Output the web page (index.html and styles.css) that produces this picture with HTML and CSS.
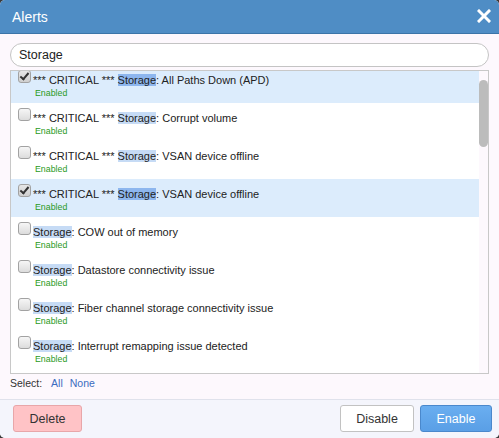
FILE: index.html
```html
<!DOCTYPE html>
<html>
<head>
<meta charset="utf-8">
<title>Alerts</title>
<link rel="stylesheet" href="styles.css">
</head>
<body>
<div class="dialog">
  <div class="header">
    <span class="title">Alerts</span>
    <svg class="close" width="14" height="14" viewBox="0 0 14 14"><path d="M2 2 L12 12 M12 2 L2 12" stroke="#fff" stroke-width="3" stroke-linecap="square"/></svg>
  </div>
  <div class="content">
    <div class="search">Storage</div>
    <div class="listbox">
      <div class="rows">
        <div class="rowsinner">
          <div class="row selected"><span class="cb checked"></span><div class="txt"><div class="name">*** CRITICAL *** <mark>Storage</mark>: All Paths Down (APD)</div><div class="status">Enabled</div></div></div>
          <div class="row"><span class="cb"></span><div class="txt"><div class="name">*** CRITICAL *** <mark>Storage</mark>: Corrupt volume</div><div class="status">Enabled</div></div></div>
          <div class="row"><span class="cb"></span><div class="txt"><div class="name">*** CRITICAL *** <mark>Storage</mark>: VSAN device offline</div><div class="status">Enabled</div></div></div>
          <div class="row selected"><span class="cb checked"></span><div class="txt"><div class="name">*** CRITICAL *** <mark>Storage</mark>: VSAN device offline</div><div class="status">Enabled</div></div></div>
          <div class="row"><span class="cb"></span><div class="txt"><div class="name"><mark>Storage</mark>: COW out of memory</div><div class="status">Enabled</div></div></div>
          <div class="row"><span class="cb"></span><div class="txt"><div class="name"><mark>Storage</mark>: Datastore connectivity issue</div><div class="status">Enabled</div></div></div>
          <div class="row"><span class="cb"></span><div class="txt"><div class="name"><mark>Storage</mark>: Fiber channel storage connectivity issue</div><div class="status">Enabled</div></div></div>
          <div class="row"><span class="cb"></span><div class="txt"><div class="name"><mark>Storage</mark>: Interrupt remapping issue detected</div><div class="status">Enabled</div></div></div>
        </div>
      </div>
      <div class="track"><div class="thumb"></div></div>
    </div>
    <div class="selectline"><span class="lbl">Select:</span><span class="lnk">All</span><span class="lnk">None</span></div>
  </div>
  <div class="footer">
    <button class="btn delete">Delete</button>
    <span class="spacer"></span>
    <button class="btn disable">Disable</button>
    <button class="btn enable">Enable</button>
  </div>
</div>
</body>
</html>
```
FILE: styles.css
```css
html { background: #3a3a3a; }
body { margin: 0; font-family: "Liberation Sans", Arial, sans-serif; }
.dialog {
  width: 499px; height: 438px; box-sizing: border-box;
  display: flex; flex-direction: column;
  background: #fdf8fd; border-radius: 5px; overflow: hidden;
}
.header {
  height: 33px; flex: none; background: #4f8dc5; border-bottom: 1px solid #3b74a8;
  display: flex; align-items: center; padding: 0 8px 0 12px;
}
.title { color: #fff; font-size: 14px; flex: 1; padding-top: 1px; }
.close { display: block; margin-top: -1px; }
.content { flex: 1; padding: 9px 10px 0 10px; display: flex; flex-direction: column; }
.search {
  height: 24px; box-sizing: border-box; border: 1px solid #c4c4c4; border-radius: 12px;
  background: #fff; font-size: 12.5px; color: #222; padding-left: 8px; line-height: 22px;
}
.listbox {
  margin-top: 3px; height: 304px; flex: none; box-sizing: border-box; border: 1px solid #c8c8c8;
  background: #fff; display: flex; overflow: hidden;
}
.rows { flex: 1; overflow: hidden; }
.rowsinner { margin-top: -6px; }
.row { height: 38px; box-sizing: border-box; display: flex; padding: 7px 0 0 7px; gap: 2px; }
.row.selected { background: #dcecfc; }
.cb {
  flex: none; width: 13px; height: 13px; box-sizing: border-box; margin-top: -2px;
  border: 1px solid #a2a2a2; border-radius: 3px;
  background: linear-gradient(#f6f6f6, #dcdcdc); position: relative;
}
.cb.checked { background: linear-gradient(#e6e6e6, #cfcfcf); }
.cb.checked::after {
  content: ""; position: absolute; left: 3px; top: 0px; width: 3px; height: 7px;
  border: solid #333; border-width: 0 2px 2px 0; transform: rotate(40deg);
}
.txt { display: flex; flex-direction: column; margin-top: 2px; }
.name { font-size: 11px; line-height: 13px; color: #222; white-space: nowrap; }
.name mark { background: #c6dbf5; color: #222; }
.row.selected .name mark { background: #8db6ee; }
.status { font-size: 8.8px; line-height: 11px; color: #2a9a1c; margin-left: 2px; margin-top: 1px; }
.track { width: 9px; flex: none; background: #fdf8fd; }
.thumb { margin-top: 9px; height: 67px; background: #bcbcbc; border-radius: 5px; }
.selectline { height: 18px; line-height: 18px; font-size: 10.5px; color: #333; display: flex; }
.lbl { margin-right: 9px; }
.lnk { color: #3a6cc0; margin-right: 7px; }
.footer {
  flex: none; height: 39px; box-sizing: border-box; border-top: 1px solid #e0e2ec;
  background: #f4f5fc; display: flex; align-items: flex-start; padding: 5px 7px 0 13px; gap: 6px;
}
.spacer { flex: 1; }
.btn {
  height: 27px; box-sizing: border-box; border-radius: 3px; font-family: "Liberation Sans", Arial, sans-serif;
  font-size: 12.5px; padding: 0; cursor: pointer;
}
.delete { width: 69px; background: #ffc3c6; border: 1px solid #e8a6a9; color: #333; }
.disable { width: 74px; background: #fff; border: 1px solid #c2c2c2; color: #333; }
.enable { width: 72px; background: linear-gradient(#6aaef0, #5a9fe6); border: 1px solid #4a88cc; color: #fff; }
```
